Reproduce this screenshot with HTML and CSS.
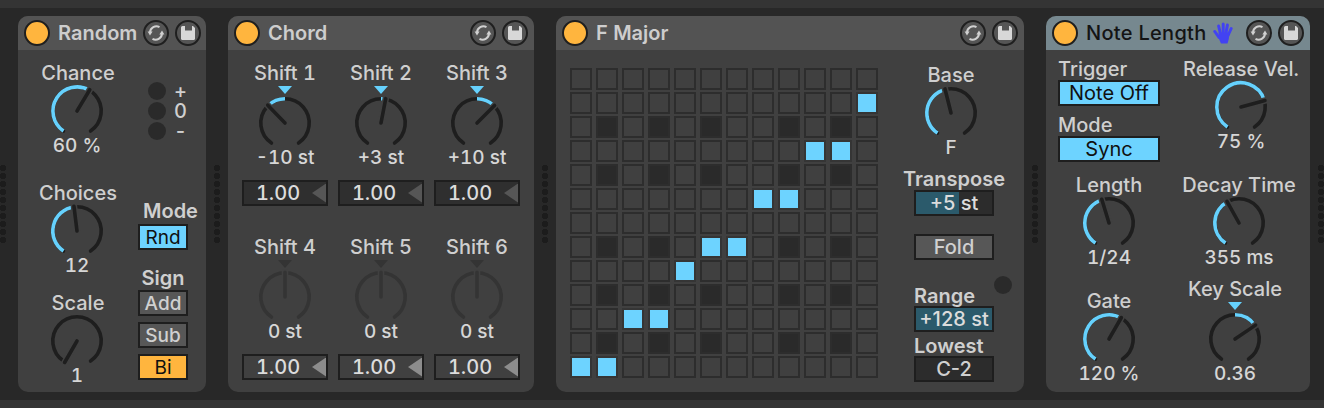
FILE: index.html
```html
<!DOCTYPE html>
<html lang="en">
<head>
    <meta charset="UTF-8">
    <title>MIDI effect rack</title>
    <link rel="stylesheet" href="styles.css">
</head>
<body>

<svg class="icon-defs" width="0" height="0">
    <symbol id="icon-sync" viewBox="0 0 22 22">
        <path d="M14.5 5.2A6.4 6.4 0 0 0 5 10.6" fill="none" stroke="#d0d0d0" stroke-width="2"/>
        <path d="M2.6 9.6H7.6L5 13.4Z" fill="#d0d0d0"/>
        <path d="M7.5 16.8A6.4 6.4 0 0 0 17 11.4" fill="none" stroke="#d0d0d0" stroke-width="2"/>
        <path d="M14.4 12.4H19.4L17 8.6Z" fill="#d0d0d0"/>
    </symbol>
    <symbol id="icon-save" viewBox="0 0 22 22">
        <path d="M5.5 4H16L18 6V17A1.5 1.5 0 0 1 16.500 18H5.500A1.500 1.500 0 0 1 4 17V5.500A1.500 1.500 0 0 1 5.500 4Z" fill="#d8d8d8"/>
        <rect x="8" y="4" width="7" height="4.500" fill="#555"/>
    </symbol>
</svg>

<div class="rack">
    <div class="grip first"></div>

    <!-- Random -->
    <section class="device random">
        <header class="device-head">
            <span class="power"></span>
            <span class="title">Random</span>
            <span class="round-btn"><svg><use href="#icon-sync"/></svg></span>
            <span class="round-btn"><svg><use href="#icon-save"/></svg></span>
        </header>
        <div class="device-body">
            <div class="random-knobs">
                <div class="knob">
                    <span class="knob-label">Chance</span>
                    <svg class="dial" data-angle="31"></svg>
                    <span class="knob-value">60 %</span>
                </div>
                <div class="knob choices">
                    <span class="knob-label">Choices</span>
                    <svg class="dial" data-angle="-7"></svg>
                    <span class="knob-value">12</span>
                </div>
                <div class="knob scale">
                    <span class="knob-label">Scale</span>
                    <svg class="dial" data-angle="-150"></svg>
                    <span class="knob-value">1</span>
                </div>
            </div>
            <div class="random-side">
                <div class="led-row"><span class="led"></span><span>+</span></div>
                <div class="led-row"><span class="led"></span><span>0</span></div>
                <div class="led-row"><span class="led"></span><span>-</span></div>
                <div class="side-title mode-title">Mode</div>
                <div class="box blue tight">Rnd</div>
                <div class="side-title sign-title">Sign</div>
                <div class="box grey">Add</div>
                <div class="box grey spaced">Sub</div>
                <div class="box orange spaced">Bi</div>
            </div>
        </div>
    </section>

    <div class="grip"></div>

    <!-- Chord -->
    <section class="device chord">
        <header class="device-head">
            <span class="power"></span>
            <span class="title">Chord</span>
            <span class="round-btn"><svg><use href="#icon-sync"/></svg></span>
            <span class="round-btn"><svg><use href="#icon-save"/></svg></span>
        </header>
        <div class="device-body shift-grid">
            <div class="shift">
                <div class="knob">
                    <span class="knob-label">Shift 1</span>
                    <span class="mark"></span>
                    <svg class="dial marked" data-angle="-44" data-origin="0"></svg>
                    <span class="knob-value">-10 st</span>
                </div>
                <div class="num-box dark">1.00<i class="arrow"></i></div>
            </div>
            <div class="shift">
                <div class="knob">
                    <span class="knob-label">Shift 2</span>
                    <span class="mark"></span>
                    <svg class="dial marked" data-angle="11" data-origin="0"></svg>
                    <span class="knob-value">+3 st</span>
                </div>
                <div class="num-box dark">1.00<i class="arrow"></i></div>
            </div>
            <div class="shift">
                <div class="knob">
                    <span class="knob-label">Shift 3</span>
                    <span class="mark"></span>
                    <svg class="dial marked" data-angle="45" data-origin="0"></svg>
                    <span class="knob-value">+10 st</span>
                </div>
                <div class="num-box dark">1.00<i class="arrow"></i></div>
            </div>
            <div class="shift">
                <div class="knob off">
                    <span class="knob-label">Shift 4</span>
                    <span class="mark"></span>
                    <svg class="dial marked" data-angle="0" data-origin="0"></svg>
                    <span class="knob-value">0 st</span>
                </div>
                <div class="num-box">1.00<i class="arrow"></i></div>
            </div>
            <div class="shift">
                <div class="knob off">
                    <span class="knob-label">Shift 5</span>
                    <span class="mark"></span>
                    <svg class="dial marked" data-angle="0" data-origin="0"></svg>
                    <span class="knob-value">0 st</span>
                </div>
                <div class="num-box">1.00<i class="arrow"></i></div>
            </div>
            <div class="shift">
                <div class="knob off">
                    <span class="knob-label">Shift 6</span>
                    <span class="mark"></span>
                    <svg class="dial marked" data-angle="0" data-origin="0"></svg>
                    <span class="knob-value">0 st</span>
                </div>
                <div class="num-box">1.00<i class="arrow"></i></div>
            </div>
        </div>
    </section>

    <div class="grip"></div>

    <!-- F Major -->
    <section class="device scale-dev">
        <header class="device-head">
            <span class="power"></span>
            <span class="title">F Major</span>
            <span class="round-btn"><svg><use href="#icon-sync"/></svg></span>
            <span class="round-btn"><svg><use href="#icon-save"/></svg></span>
        </header>
        <div class="device-body">
            <div class="pads" id="pads"></div>
            <div class="scale-side">
                <div class="knob base">
                    <span class="knob-label">Base</span>
                    <svg class="dial" data-angle="-14"></svg>
                    <span class="knob-value">F</span>
                </div>
                <div class="side-title wide transpose-title">Transpose</div>
                <div class="box wide partial tight-1">+5 st</div>
                <div class="box wide grey fold">Fold</div>
                <div class="range-row">
                    <div class="side-title">Range</div>
                    <span class="led range-led"></span>
                </div>
                <div class="box wide teal">+128 st</div>
                <div class="side-title lowest-title">Lowest</div>
                <div class="box wide coal">C-2</div>
            </div>
        </div>
    </section>

    <div class="grip"></div>

    <!-- Note Length -->
    <section class="device note-length">
        <header class="device-head selected">
            <span class="power"></span>
            <span class="title">Note Length</span>
            <svg class="hand" viewBox="0 0 20 22" width="20" height="22">
                <g fill="none" stroke="#4242f2" stroke-width="3" stroke-linecap="round">
                    <path d="M1.800 9.500 6 15.500"/>
                    <path d="M5.600 4 7.800 13"/>
                    <path d="M10.200 2V12"/>
                    <path d="M14.400 3 12.800 12"/>
                    <path d="M18.200 6.500 15 13.500"/>
                </g>
                <path d="M5.500 10.500H16.500L15.800 17 14.500 21.500H8L6 17Z" fill="#4242f2"/>
            </svg>
            <span class="round-btn"><svg><use href="#icon-sync"/></svg></span>
            <span class="round-btn"><svg><use href="#icon-save"/></svg></span>
        </header>
        <div class="device-body">
            <div class="length-left">
                <div class="side-title">Trigger</div>
                <div class="box blue full">Note Off</div>
                <div class="side-title mode-label">Mode</div>
                <div class="box blue full">Sync</div>
                <div class="knob length-knob">
                    <span class="knob-label">Length</span>
                    <svg class="dial" data-angle="-17"></svg>
                    <span class="knob-value">1/24</span>
                </div>
                <div class="knob gate-knob">
                    <span class="knob-label">Gate</span>
                    <svg class="dial" data-angle="30"></svg>
                    <span class="knob-value">120 %</span>
                </div>
            </div>
            <div class="length-right">
                <div class="knob release-knob">
                    <span class="knob-label">Release Vel.</span>
                    <svg class="dial" data-angle="75"></svg>
                    <span class="knob-value">75 %</span>
                </div>
                <div class="knob decay-knob">
                    <span class="knob-label">Decay Time</span>
                    <svg class="dial" data-angle="-29"></svg>
                    <span class="knob-value">355 ms</span>
                </div>
                <div class="knob key-knob">
                    <span class="knob-label">Key Scale</span>
                    <span class="mark"></span>
                    <svg class="dial marked" data-angle="56" data-origin="0"></svg>
                    <span class="knob-value">0.36</span>
                </div>
            </div>
        </div>
    </section>

    <div class="grip"></div>
</div>

<script src="script.js"></script>
</body>
</html>
```

FILE: styles.css
```css
* {
    box-sizing: border-box;
}
body {
    margin: 0;
    height: 408px;
    overflow: hidden;
    background-color: #343434;
    color: #cfcfcf;
    font-family: Inter, "Noto Sans", sans-serif;
    font-size: 20px;
    font-weight: 450;
    font-variant-numeric: tabular-nums;
}
.icon-defs {
    display: block;
}
.rack {
    display: flex;
    gap: 8px;
    height: 392px;
    margin-top: 8px;
    padding: 8px 0;
    background-color: #282828;
}

/* resize handle between devices */
.grip {
    flex: none;
    align-self: center;
    width: 6px;
    height: 78px;
    background-image: radial-gradient(circle at 3px 3px, #1c1c1c 3px, transparent 3.5px);
    background-size: 6px 8px;
}
.grip.first {
    margin-right: 4px;
}

.device {
    flex: none;
    display: flex;
    flex-direction: column;
    border-radius: 10px;
    overflow: hidden;
    background-color: #404040;
}
.random { width: 188px; }
.chord { width: 306px; }
.scale-dev { width: 468px; }
.note-length { width: 264px; }

.device-head {
    flex: none;
    display: flex;
    align-items: center;
    gap: 6px;
    height: 34px;
    padding: 0 6px;
    background-color: #535353;
}
.device-head.selected {
    background-color: #76888f;
}
.power {
    flex: none;
    width: 26px;
    height: 26px;
    border: 2px solid #1f1f1f;
    border-radius: 50%;
    background-color: #ffb53e;
}
.title {
    flex: 1;
    margin-left: 2px;
    font-size: 20px;
    font-weight: 600;
    color: #cdcdcd;
    white-space: nowrap;
}
.selected .title {
    color: #141414;
    font-weight: 500;
    letter-spacing: 0.3px;
}
.hand {
    flex: none;
    margin-right: 7px;
}
.round-btn {
    flex: none;
    display: flex;
    align-items: center;
    justify-content: center;
    width: 26px;
    height: 26px;
    border: 2px solid #1f1f1f;
    border-radius: 50%;
    background-color: #555;
}
.round-btn svg {
    width: 22px;
    height: 22px;
}
.device-body {
    flex: 1;
    display: flex;
}

/* knobs */
.knob {
    display: flex;
    flex-direction: column;
    align-items: center;
    white-space: nowrap;
}
.knob-label {
    height: 24px;
    line-height: 25px;
}
.knob-value {
    height: 16px;
    line-height: 17px;
    font-size: 19px;
    color: #d6d6d6;
}
.dial {
    display: block;
    width: 52px;
    height: 52px;
    overflow: visible;
}
.dial.marked {
    margin-top: 3px;
}
.mark {
    width: 14px;
    height: 8px;
    margin-top: 1px;
    background-color: #66d1fd;
    clip-path: polygon(0 0, 100% 0, 50% 100%);
}
.track, .needle {
    stroke: #1e1e1e;
}
.level {
    stroke: #66d1fd;
}
.halo {
    stroke: #404040;
}
.off .track, .off .needle {
    stroke: #343434;
}
.off .mark {
    background-color: #343434;
}

/* boxes */
.box {
    display: flex;
    align-items: center;
    justify-content: center;
    width: 50px;
    height: 26px;
    border: 2px solid #1e1e1e;
    font-size: 19px;
    font-variant-numeric: normal;
    white-space: nowrap;
}
.box.blue {
    background-color: #6dd3ff;
    color: #101010;
    font-weight: 400;
}
.box.grey {
    background-color: #575757;
    color: #d0d0d0;
}
.box.orange {
    background-color: #ffb53e;
    color: #101010;
    font-weight: 400;
}
.box.teal {
    background-color: #2b5a6b;
    color: #dcdcdc;
}
.box.coal {
    background-color: #2c2c2c;
    color: #d0d0d0;
}
.box.partial {
    background: linear-gradient(to right, #2b5a6b 57%, #2c2c2c 57%);
    color: #dcdcdc;
}
.box.wide, .side-title.wide {
    width: 80px;
}
.box.wide, .box.full {
    font-size: 20px;
}
.box.full {
    width: 102px;
}
.box.tight { margin-top: 3px; }
.box.tight-1 { margin-top: 1px; }
.box.spaced { margin-top: 6px; }

.side-title {
    height: 20px;
    line-height: 20px;
    font-weight: 600;
    white-space: nowrap;
}
.side-title.wide {
    display: flex;
    justify-content: center;
}

.led {
    flex: none;
    width: 18px;
    height: 18px;
    border-radius: 50%;
    background-color: #2a2a2a;
}

/* Random */
.random-knobs {
    width: 118px;
    padding-top: 11px;
}
.random-knobs .knob-label {
    margin-left: 2px;
}
.knob.choices { margin-top: 28px; }
.knob.scale { margin-top: 18px; }
.random-side {
    width: 50px;
    margin-left: 2px;
    padding-top: 31px;
}
.led-row {
    display: flex;
    align-items: center;
    gap: 8px;
    height: 20px;
    padding-left: 10px;
    line-height: 18px;
}
.side-title.mode-title {
    margin-top: 60px;
    text-align: center;
    padding-left: 5px;
}
.side-title.sign-title {
    margin-top: 18px;
    margin-bottom: 2px;
    text-align: center;
}

/* Chord */
.shift-grid {
    display: grid;
    grid-template-columns: repeat(3, 86px);
    grid-auto-rows: min-content;
    column-gap: 10px;
    row-gap: 29px;
    padding: 11px 14px 0;
}
.num-box {
    display: flex;
    align-items: center;
    height: 26px;
    margin-top: 15px;
    border: 2px solid #1e1e1e;
    color: #dcdcdc;
    --arrow: #8c8c8c;
    justify-content: center;
    padding-right: 14px;
}
.num-box.dark {
    background-color: #2f2f2f;
    --arrow: #565656;
}
.arrow {
    width: 14px;
    height: 19px;
    margin-right: -14px;
    background-color: var(--arrow);
    clip-path: polygon(100% 0, 100% 100%, 0 50%);
    margin-left: auto;
}
.num-box::before {
    content: "";
    margin-left: auto;
}

/* Scale */
.pads {
    display: grid;
    grid-template-columns: repeat(12, 22px);
    grid-auto-rows: 22px;
    gap: 2px 4px;
    margin: 18px 0 0 14px;
    align-self: flex-start;
}
.pad {
    border: 2px solid #2d2d2d;
}
.pad.black {
    background-color: #2a2a2a;
}
.pad.on {
    background-color: #6dd3ff;
    border-color: #353535;
}
.scale-side {
    width: 98px;
    margin-left: 36px;
    padding-top: 13px;
}
.knob.base {
    width: 74px;
}
.transpose-title {
    margin-top: 14px;
}
.box.fold {
    margin-top: 18px;
}
.range-row {
    display: flex;
    justify-content: space-between;
    height: 20px;
    margin-top: 26px;
}
.range-led {
    margin-top: -10px;
}
.lowest-title {
    margin-top: 4px;
}

/* Note Length */
.length-left {
    width: 102px;
    margin-left: 12px;
    padding-top: 9px;
}
.length-left .side-title {
    height: 21px;
    line-height: 21px;
    font-weight: 500;
}
.side-title.mode-label {
    margin-top: 9px;
}
.knob.length-knob { margin-top: 11px; }
.knob.gate-knob { margin-top: 24px; }
.length-right {
    width: 140px;
    margin-left: 10px;
    padding-top: 7px;
}
.knob.release-knob { padding-left: 2px; }
.knob.decay-knob { margin-top: 24px; padding-right: 2px; }
.knob.key-knob { margin-top: 12px; padding-right: 10px; }
```

FILE: script.js
```js
// note pads: row -> columns that are switched on
var active = {1: [11], 3: [9, 10], 5: [7, 8], 7: [5, 6], 8: [4], 10: [2, 3], 12: [0, 1]};
var blackRows = [2, 4, 7, 9, 11];
var blackCols = [1, 3, 5, 8, 10];

var pads = document.getElementById('pads');
for (var r = 0; r < 13; r++) {
    for (var c = 0; c < 12; c++) {
        var pad = document.createElement('div');
        pad.className = 'pad';
        if (blackRows.indexOf(r) >= 0 && blackCols.indexOf(c) >= 0) pad.className += ' black';
        if (active[r] && active[r].indexOf(c) >= 0) pad.className += ' on';
        pads.appendChild(pad);
    }
}

// dials
var MIN = -146, MAX = 146, C = 26, R = 24.2;

function point(deg, rad) {
    var a = deg * Math.PI / 180;
    return (C + rad * Math.sin(a)).toFixed(2) + ' ' + (C - rad * Math.cos(a)).toFixed(2);
}

function arc(from, to) {
    var large = to - from > 180 ? 1 : 0;
    return 'M' + point(from, R) + 'A' + R + ' ' + R + ' 0 ' + large + ' 1 ' + point(to, R);
}

function line(svg, cls, d, width, cap) {
    var p = document.createElementNS('http://www.w3.org/2000/svg', 'path');
    p.setAttribute('class', cls);
    p.setAttribute('d', d);
    p.setAttribute('fill', 'none');
    p.setAttribute('stroke-width', width);
    p.setAttribute('stroke-linecap', cap);
    svg.appendChild(p);
}

document.querySelectorAll('.dial').forEach(function (svg) {
    var angle = Number(svg.dataset.angle);
    var origin = svg.dataset.origin ? Number(svg.dataset.origin) : MIN;
    var needle = 'M' + C + ' ' + C + 'L' + point(angle, R + 0.6);

    line(svg, 'track', arc(MIN, MAX), 3.6, 'round');
    if (angle !== origin) {
        line(svg, 'level', arc(Math.min(origin, angle), Math.max(origin, angle)), 3.6, 'butt');
    }
    line(svg, 'halo', 'M' + C + ' ' + C + 'L' + point(angle, R + 3), 6.5, 'butt');
    line(svg, 'needle', needle, 3.6, 'round');
});
```
